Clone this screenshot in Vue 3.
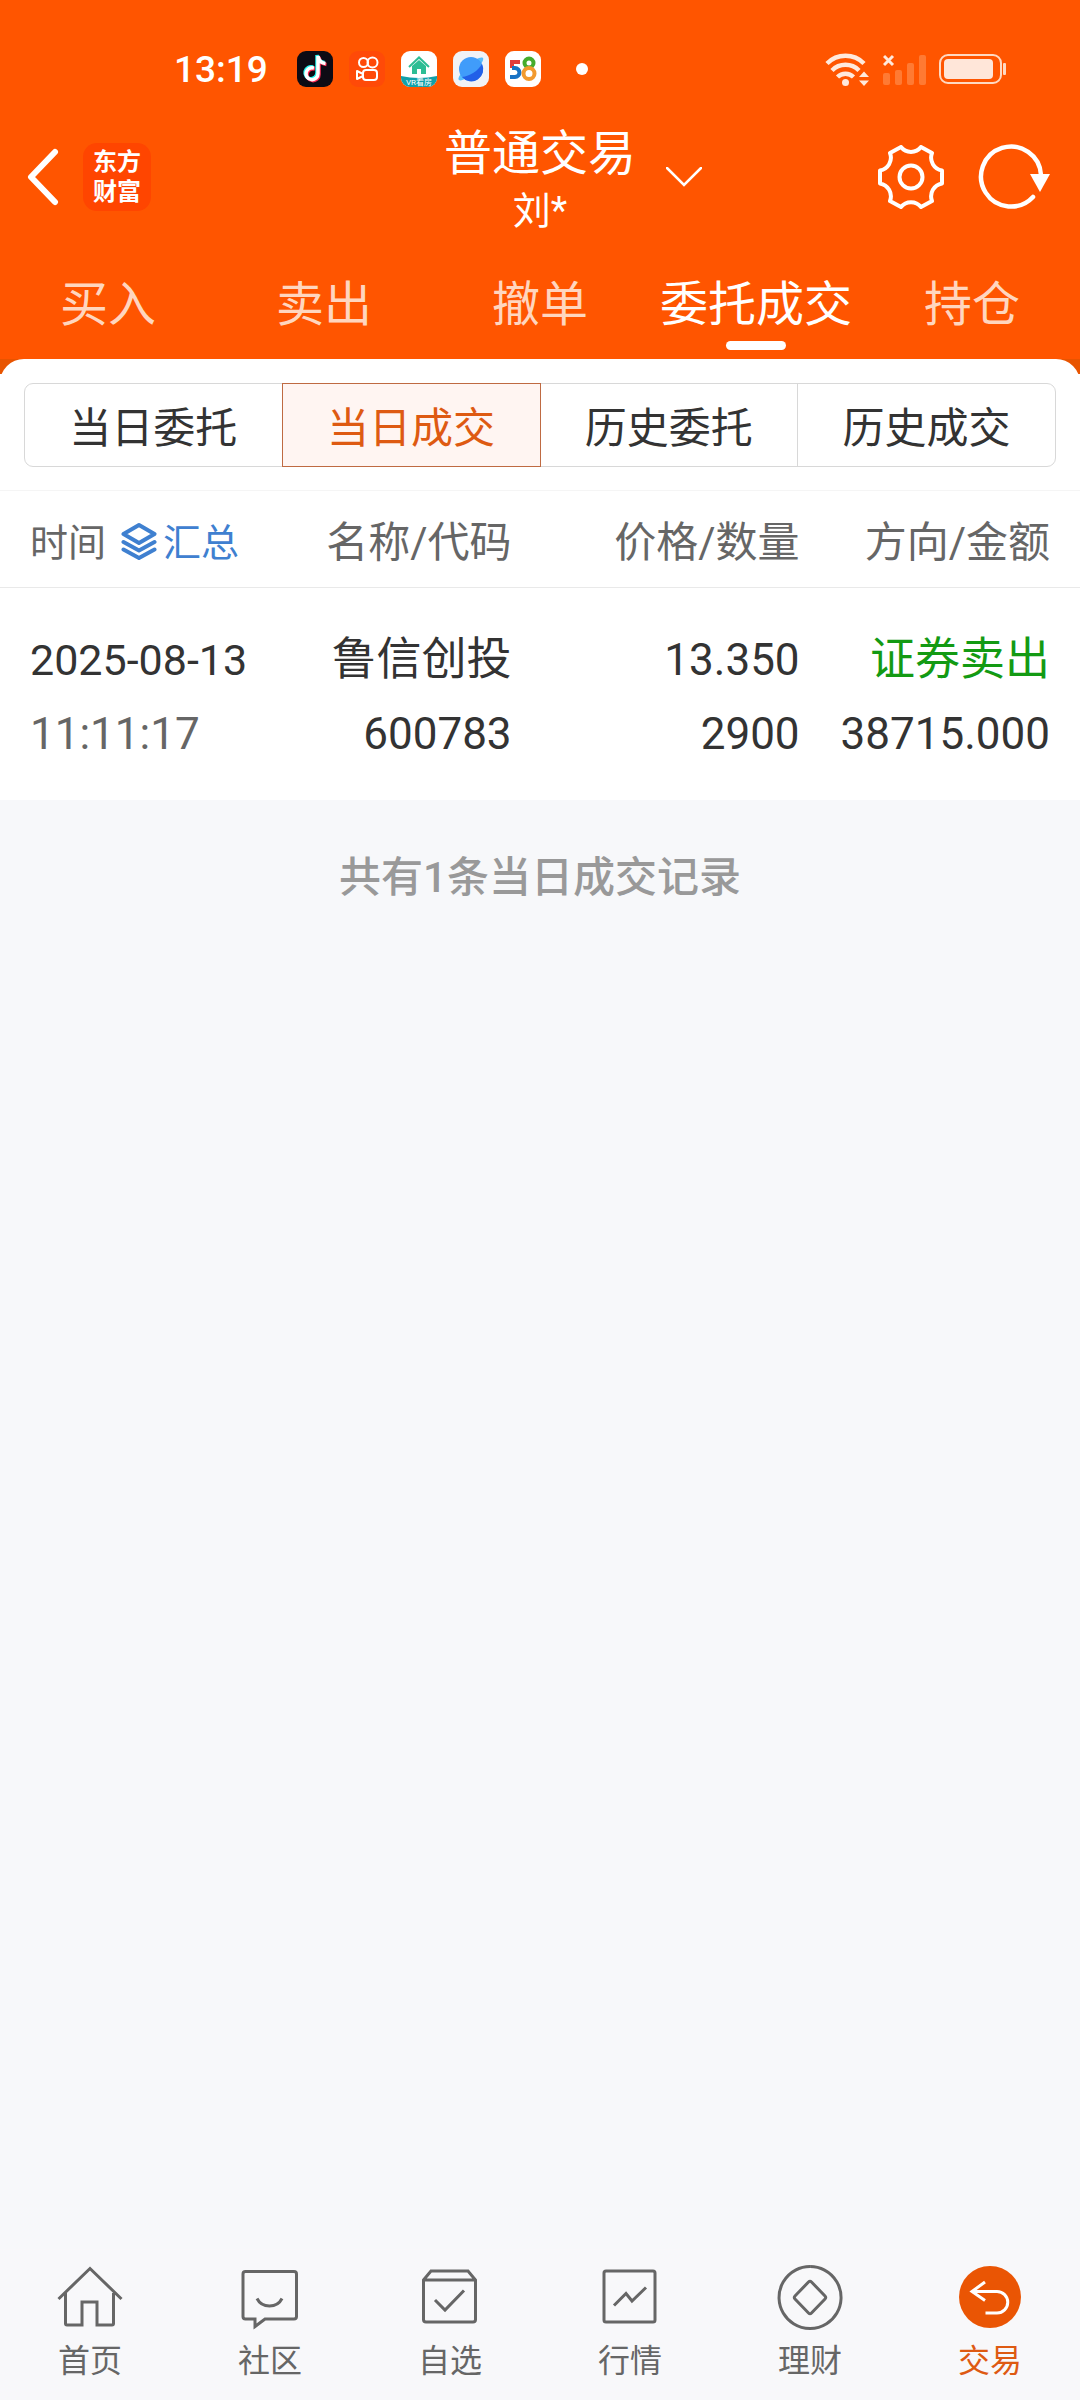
<template>
  <div class="page">
    <header class="header">
      <div class="status-bar">
        <span class="clock">13:19</span>
        <div class="app-icons">
          <svg class="app-icon" viewBox="0 0 36 36">
            <rect width="36" height="36" rx="9" fill="#0d0b14" />
            <g fill="none" stroke-width="3.500">
              <path d="M17 17a6 6 0 1 0 4 5.500V5c.5 4 3 7 7.500 7.500" stroke="#fe2c55" transform="translate(1 1)" />
              <path d="M17 17a6 6 0 1 0 4 5.500V5c.5 4 3 7 7.500 7.500" stroke="#25f4ee" transform="translate(-1 -1)" />
              <path d="M17 17a6 6 0 1 0 4 5.500V5c.5 4 3 7 7.500 7.500" stroke="#fff" />
            </g>
          </svg>
          <svg class="app-icon" viewBox="0 0 36 36">
            <rect width="36" height="36" rx="9" fill="#ff4a08" />
            <g fill="none" stroke="#fff" stroke-width="2" stroke-linejoin="round">
              <circle cx="14.500" cy="11.500" r="4.500" />
              <circle cx="23.500" cy="11.500" r="5" />
              <rect x="14" y="19" width="14" height="10" rx="3" />
              <path d="M14 23l-6-3v8l6-3" />
            </g>
          </svg>
          <svg class="app-icon" viewBox="0 0 36 36">
            <rect width="36" height="36" rx="9" fill="#fff" />
            <path d="M0 25q18 4 36 0v2a9 9 0 0 1-9 9H9a9 9 0 0 1-9-9z" fill="#12a0a8" />
            <path d="M8 16L18 6.500 28 16" fill="none" stroke="#2dbd94" stroke-width="2" />
            <path d="M11 15l7-6 7 6v8h-14z" fill="#2dbd94" />
            <path d="M16 18h4v5h-4z" fill="#fff" />
            <text x="18" y="34" class="app-caption">VR看房</text>
          </svg>
          <svg class="app-icon" viewBox="0 0 36 36">
            <rect width="36" height="36" rx="9" fill="#f1f2f6" />
            <path d="M6 29C2 26 25 3 30 7c3 4-20 26-24 22z" fill="#58bdfb" />
            <circle cx="18" cy="18" r="12" fill="#409cfa" />
            <path d="M29 13A12 12 0 0 1 9 26C17 25 25 20 29 13z" fill="#2260e8" />
          </svg>
          <svg class="app-icon" viewBox="0 0 36 36">
            <rect width="36" height="36" rx="9" fill="#fff" />
            <g fill="none" stroke-width="4">
              <path d="M15 11H7v6" stroke="#e23b3b" />
              <path d="M7 17h3a4.500 4.500 0 0 1 0 9H5" stroke="#1872c4" />
              <circle cx="24" cy="12" r="4.500" stroke="#45ac2c" />
              <circle cx="24" cy="22.500" r="5.500" stroke="#f29a2e" />
            </g>
          </svg>
        </div>
        <span class="dot"></span>
        <div class="signals">
          <svg width="46" height="36" viewBox="0 0 46 36">
            <g fill="none" stroke="#ffe9dc" stroke-width="4.500">
              <path d="M2 12.500a26 26 0 0 1 37 0" />
              <path d="M7 19.500a19 19 0 0 1 27 0" />
              <path d="M12.500 26a11.500 11.500 0 0 1 16 0" />
            </g>
            <circle cx="20.500" cy="31.500" r="3.500" fill="#ffe9dc" />
            <path d="M34 26l5-5.500 5 5.500zM34 29.500l5 5.500 5-5.500z" fill="#ffe9dc" />
          </svg>
          <svg width="44" height="36" viewBox="0 0 44 36">
            <path d="M1 5l9 9m0-9l-9 9" stroke="#ffe9dc" stroke-width="3" />
            <g fill="#ff7a33">
              <rect x="0" y="22" width="7" height="12" rx="2" />
              <rect x="12" y="19" width="7" height="15" rx="2" />
              <rect x="24" y="12" width="7" height="22" rx="2" />
              <rect x="36" y="4" width="7" height="30" rx="2" />
            </g>
          </svg>
          <svg width="68" height="36" viewBox="0 0 68 36">
            <rect x="1" y="4" width="61" height="28" rx="8" fill="none" stroke="#ffd9c2" stroke-width="2" />
            <rect x="5" y="8" width="49" height="20" rx="4" fill="#ffe6d9" />
            <rect x="64" y="12" width="3" height="12" rx="1" fill="#ffd9c2" />
          </svg>
        </div>
      </div>

      <div class="title-bar">
        <div class="title-left">
          <button class="icon-button" aria-label="返回">
            <svg width="32" height="58" viewBox="0 0 32 58">
              <path d="M28 4L4 29l24 25" fill="none" stroke="#fff" stroke-width="6" stroke-linecap="round" stroke-linejoin="round" />
            </svg>
          </button>
          <div class="brand">东方<br />财富</div>
        </div>
        <div class="title-text">
          <h1 class="title">普通交易</h1>
          <span class="account">刘*</span>
        </div>
        <div class="title-right">
          <button class="icon-button switcher" aria-label="切换账户">
            <svg width="36" height="20" viewBox="0 0 36 20">
              <path d="M1 1l17 17L35 1" fill="none" stroke="#fff" stroke-width="2.500" stroke-linecap="round" />
            </svg>
          </button>
          <button class="icon-button" aria-label="设置">
            <svg width="66" height="64" viewBox="0 0 66 64">
              <g fill="none" stroke="#fff" stroke-width="4" stroke-linejoin="round">
                <path d="M23 2C28 8.500 38 8.500 43 2L54 8C51 16 56 24 64 25.500V38.500C56 40 51 48 54 56L43 62C38 55.500 28 55.500 23 62L12 56C15 48 10 40 2 38.500V25.500C10 24 15 16 12 8Z" />
                <circle cx="33" cy="32" r="11.500" />
              </g>
            </svg>
          </button>
          <button class="icon-button" aria-label="刷新">
            <svg width="72" height="66" viewBox="0 0 72 66">
              <path d="M63 31A30 30 0 1 0 55 53" fill="none" stroke="#fff" stroke-width="4.500" stroke-linecap="round" />
              <path d="M52 30h20L62 48z" fill="#fff" />
            </svg>
          </button>
        </div>
      </div>

      <nav class="tabs">
        <button
          v-for="tab in tabs"
          :key="tab"
          class="tab"
          :class="{ active: tab === activeTab }"
          @click="activeTab = tab"
        >
          {{ tab }}
        </button>
      </nav>
    </header>

    <main class="content">
      <div class="panel-wrap">
        <section class="panel">
          <div class="segments">
            <button
              v-for="item in segments"
              :key="item"
              class="segment"
              :class="{ active: item === activeSegment }"
              @click="activeSegment = item"
            >
              {{ item }}
            </button>
          </div>

          <table class="deals">
            <thead>
              <tr>
                <th class="col-time">
                  <div class="time-head">
                    <span>时间</span>
                    <button class="summary">
                      <svg class="summary-icon" width="36" height="38" viewBox="0 0 36 38">
                        <g fill="none" stroke="#3f80d0" stroke-width="4" stroke-linecap="round" stroke-linejoin="round">
                          <path d="M18 3l15.500 9L18 21 2.500 12z" />
                          <path d="M2.500 20L18 28.500 33.500 20" />
                          <path d="M2.500 27.500L18 36l15.500-8.500" />
                        </g>
                      </svg>
                      汇总
                    </button>
                  </div>
                </th>
                <th class="col-name">名称/代码</th>
                <th class="col-price">价格/数量</th>
                <th class="col-side">方向/金额</th>
              </tr>
            </thead>
            <tbody>
              <tr v-for="deal in deals" :key="deal.time">
                <td class="col-time">
                  <div class="date">{{ deal.date }}</div>
                  <div class="time">{{ deal.time }}</div>
                </td>
                <td>
                  <div class="name">{{ deal.name }}</div>
                  <div>{{ deal.code }}</div>
                </td>
                <td>
                  <div>{{ deal.price }}</div>
                  <div>{{ deal.count }}</div>
                </td>
                <td>
                  <div class="name sell">{{ deal.side }}</div>
                  <div>{{ deal.amount }}</div>
                </td>
              </tr>
            </tbody>
          </table>
        </section>
      </div>
      <p class="total">共有{{ deals.length }}条当日成交记录</p>
    </main>

    <nav class="bottom-nav">
      <a
        v-for="item in navItems"
        :key="item.label"
        href="#"
        class="nav-item"
        :class="{ active: item.active }"
      >
        <svg class="nav-icon" viewBox="0 0 66 66">
          <circle v-if="item.active" cx="33" cy="32" r="31" class="nav-disc" />
          <path :d="item.icon" />
        </svg>
        <span>{{ item.label }}</span>
      </a>
    </nav>
  </div>
</template>

<script setup>
import { ref } from 'vue';

const tabs = ['买入', '卖出', '撤单', '委托成交', '持仓'];
const activeTab = ref('委托成交');

const segments = ['当日委托', '当日成交', '历史委托', '历史成交'];
const activeSegment = ref('当日成交');

const deals = ref([
  {
    date: '2025-08-13',
    time: '11:11:17',
    name: '鲁信创投',
    code: '600783',
    price: '13.350',
    count: '2900',
    side: '证券卖出',
    amount: '38715.000',
  },
]);

const navItems = [
  {
    label: '首页',
    icon: 'M1.5 34L33 3.500 64.500 34M8.500 28V58.500q0 1.500 1.500 1.500H25V37H40V60H55q1.500 0 1.500-1.500V28',
  },
  {
    label: '社区',
    icon: 'M8.500 6.500H57q2.500 0 2.500 2.500V51.500q0 2.500-2.500 2.500H28L18 61.500V54H8.500Q6 54 6 51.500V9Q6 6.500 8.500 6.500M20 33.500C25 43.500 40 43.500 45 33.500',
  },
  {
    label: '自选',
    icon: 'M6.500 15L14 6H51L58.500 15V54.500q0 2.500-2.500 2.500H9q-2.500 0-2.500-2.500ZM6.500 15H58.500M18 35L28 45 47 25.500',
  },
  {
    label: '行情',
    icon: 'M9 6H56q2 0 2 2V55q0 2-2 2H9q-2 0-2-2V8q0-2 2-2M17 40.500L29 28.500 35 36 49 22.500',
  },
  {
    label: '理财',
    icon: 'M33 1.500a31 31 0 1 0 .1 0M31.500 17q1.500-1.500 3 0L48 31q1.500 1.500 0 3L34.500 48q-1.500 1.500-3 0L18 34q-1.500-1.500 0-3Z',
  },
  {
    label: '交易',
    icon: 'M28 17L15 26.500 28 35.500M15 26.500H40A10.500 10.500 0 0 1 40 48H28.500',
    active: true,
  },
];
</script>

<style>
body {
  margin: 0;
  background-color: #f7f8fa;
}
</style>

<style scoped>
.page {
  display: flex;
  flex-direction: column;
  min-height: 100vh;
  font-family: Roboto, "Noto Sans CJK SC", sans-serif;
  color: #333;
  background-color: #f7f8fa;
}

button {
  padding: 0;
  border: none;
  background: none;
  font: inherit;
  color: inherit;
  cursor: pointer;
}

svg {
  display: block;
}

.header {
  color: #fff;
  background-color: #ff5500;
}

.status-bar {
  display: flex;
  align-items: center;
  height: 98px;
  padding: 20px 73px 0 174px;
}

.clock {
  font-size: 37px;
  font-weight: 500;
}

.app-icons {
  display: flex;
  gap: 16px;
  margin-left: 29px;
}

.app-icon {
  width: 36px;
  height: 36px;
}

.app-caption {
  font-size: 8px;
  fill: #fff;
  text-anchor: middle;
}

.dot {
  width: 12px;
  height: 12px;
  margin-left: 35px;
  border-radius: 50%;
  background-color: #fff;
}

.signals {
  display: flex;
  gap: 12px;
  margin-left: auto;
}

.title-bar {
  display: grid;
  grid-template-columns: 1fr auto 1fr;
  align-items: center;
  height: 118px;
}

.title-left {
  display: flex;
  align-items: center;
  gap: 24px;
  padding-left: 27px;
}

.brand {
  padding: 4px 10px;
  border-radius: 14px;
  background-color: #ff4500;
  font-size: 24px;
  font-weight: 700;
  line-height: 30px;
}

.title-text {
  padding-top: 4px;
  text-align: center;
}

.title {
  margin: 0;
  font-size: 48px;
  font-weight: 400;
  line-height: 64px;
}

.account {
  display: block;
  font-size: 38px;
  line-height: 50px;
}

.title-right {
  display: flex;
  align-items: center;
  gap: 34px;
  padding: 0 30px;
}

.switcher {
  margin-right: auto;
}

.tabs {
  display: flex;
  padding: 37px 0 9px;
}

.tab {
  flex: 1;
  font-size: 48px;
  line-height: 64px;
  color: #ffd6bf;
}

.tab::after {
  content: "";
  display: block;
  width: 60px;
  height: 9px;
  margin: 4px auto 0;
  border-radius: 5px;
}

.tab.active {
  color: #fff;
}

.tab.active::after {
  background-color: #fff;
}

.content {
  flex: 1;
}

.panel-wrap {
  background: linear-gradient(#e85400 15px, #fff 15px);
}

.panel {
  padding-top: 24px;
  border-radius: 24px 24px 0 0;
  background-color: #fff;
}

.segments {
  display: flex;
  margin: 0 24px 23px;
}

.segment {
  flex: 1;
  height: 84px;
  padding-bottom: 2px;
  border: 1px solid #d8d8d8;
  font-size: 42px;
}

.segment + .segment {
  margin-left: -1px;
}

.segment:first-child {
  border-radius: 9px 0 0 9px;
}

.segment:last-child {
  border-radius: 0 9px 9px 0;
}

.segment.active {
  z-index: 1;
  border-color: #bf6a42;
  color: #de5a12;
  background-color: #fff5f2;
}

.deals {
  width: 100%;
  table-layout: fixed;
  border-collapse: collapse;
  text-align: right;
}

.deals th {
  height: 94px;
  padding: 0 0 2px;
  border-top: 1px solid #f5f5f5;
  border-bottom: 1px solid #e9e9e9;
  font-size: 42px;
  font-weight: 400;
  color: #666;
}

.deals td {
  padding: 35px 0 29px;
  font-size: 44px;
  line-height: 74px;
}

.deals .col-time {
  width: 27%;
  padding-left: 30px;
  box-sizing: border-box;
  text-align: left;
}

.col-name {
  width: 220px;
}

.col-price {
  width: 288px;
}

.deals th:last-child,
.deals td:last-child {
  padding-right: 30px;
}

.time-head {
  display: flex;
  align-items: center;
  gap: 15px;
  padding-top: 2px;
  font-size: 38px;
}

.summary {
  display: flex;
  align-items: center;
  gap: 6px;
  color: #3f80d0;
}

.summary-icon {
  padding-top: 4px;
}

.date {
  font-size: 43px;
}

.time {
  color: #666;
}

.name {
  font-size: 45px;
}

.sell {
  color: #139a13;
}

.total {
  margin: 46px 0;
  font-size: 42px;
  font-weight: 500;
  line-height: 64px;
  text-align: center;
  color: #999;
}

.bottom-nav {
  display: flex;
  padding: 16px 0;
  background-color: #f8f8fa;
}

.nav-item {
  flex: 1;
  display: flex;
  flex-direction: column;
  align-items: center;
  gap: 7px;
  font-size: 32px;
  line-height: 46px;
  color: #666;
  text-decoration: none;
}

.nav-icon {
  width: 66px;
  height: 66px;
  fill: none;
  stroke: #666;
  stroke-width: 3;
}

.nav-disc {
  fill: #ea5504;
  stroke: none;
}

.nav-item.active {
  color: #de5a12;
}

.nav-item.active path {
  stroke: #fff;
}
</style>
